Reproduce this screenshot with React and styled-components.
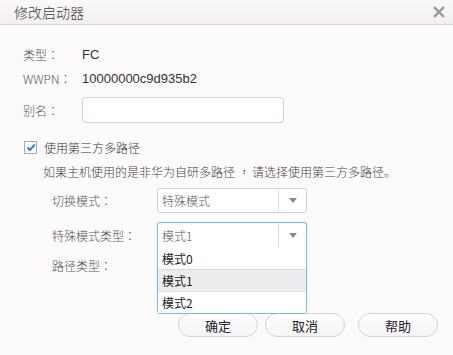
import React from "react";
import styled, { createGlobalStyle } from "styled-components";

const Global = createGlobalStyle`
  html, body { margin: 0; padding: 0; }
  body {
    background: #fdfafc;
    font-family: "Noto Sans CJK SC", "Liberation Sans", sans-serif;
    font-size: 12px;
    font-weight: 300;
    color: #333;
  }
`;

const Dialog = styled.div`
  width: 453px;
  height: 355px;
  box-sizing: border-box;
  display: flex;
  flex-direction: column;
  background: #fdfafc;
`;

const Header = styled.div`
  height: 25px;
  box-sizing: border-box;
  display: flex;
  align-items: center;
  justify-content: space-between;
  padding: 0 8px 0 14px;
  background: linear-gradient(#fbf8fa, #f2eef1);
  border-bottom: 1px solid #dcd8db;
  font-size: 14px;
  color: #3a3a3a;
`;

const Close = styled.span`
  display: flex;
  width: 12px;
  height: 12px;
`;

const Body = styled.div`
  display: flex;
  flex-direction: column;
  padding-left: 23px;
`;

const InfoRow = styled.div`
  display: flex;
  align-items: center;
  height: ${(p) => p.$h || 23}px;
  margin-top: ${(p) => p.$mt || 0}px;
`;

const Label = styled.span`
  width: ${(p) => p.$w}px;
  flex: none;
  color: #555;
  white-space: nowrap;
`;

const Colon = styled.span`
  font-family: "Noto Sans CJK TC", sans-serif;
`;

const Value = styled.span`
  color: #333;
  font-family: "Liberation Sans", "Noto Sans CJK SC", sans-serif;
  font-weight: 400;
  font-size: 13px;
`;

const TextInput = styled.input`
  width: 202px;
  height: 26px;
  box-sizing: border-box;
  border: 1px solid #d4d0d3;
  border-radius: 3px;
  background: #fff;
  outline: none;
  padding: 0 4px;
`;

const CheckRow = styled.label`
  display: flex;
  align-items: center;
  gap: 7px;
  height: 20px;
  margin-top: 14px;
  padding-left: 1px;
  color: #333;
`;

const Box = styled.span`
  width: 13px;
  height: 13px;
  box-sizing: border-box;
  border: 1px solid #a9a9b0;
  background: #fff;
  display: flex;
  align-items: center;
  justify-content: center;
`;

const Desc = styled.div`
  height: 19px;
  margin-top: 5px;
  padding-left: 20px;
  display: flex;
  align-items: center;
  color: #444;
  white-space: pre;
`;

const Punct = styled.span`
  font-family: "Noto Sans CJK TC", sans-serif;
  padding: 0 2px 0 3px;
`;

const FormRow = styled.div`
  position: relative;
  display: flex;
  align-items: center;
  padding-left: 29px;
  height: ${(p) => p.$h || 25}px;
  margin-top: ${(p) => p.$mt || 0}px;
`;

const Select = styled.div`
  width: 150px;
  height: ${(p) => (p.$open ? 26 : 25)}px;
  box-sizing: border-box;
  display: flex;
  align-items: stretch;
  background: #fff;
  border: 1px solid ${(p) => (p.$open ? "#6cc3df" : "#d4d0d3")};
  border-radius: ${(p) => (p.$open ? "3px 3px 0 0" : "3px")};
  border-bottom-color: ${(p) => (p.$open ? "#dcdadc" : "#d4d0d3")};
  position: relative;
`;

const SelectText = styled.span`
  flex: 1;
  display: flex;
  align-items: center;
  padding-left: 4px;
  color: #555;
`;

const Arrow = styled.span`
  width: 27px;
  border-left: 1px solid #dcdadc;
  display: flex;
  align-items: center;
  justify-content: center;
  &::after {
    content: "";
    border-left: 4px solid transparent;
    border-right: 4px solid transparent;
    border-top: 5px solid #888;
  }
`;

const Menu = styled.ul`
  position: absolute;
  left: -1px;
  top: 24px;
  width: 150px;
  box-sizing: border-box;
  margin: 0;
  padding: 0;
  list-style: none;
  background: #fff;
  border: 1px solid #6cc3df;
  border-top: none;
  border-radius: 0 0 3px 3px;
  z-index: 2;
`;

const Item = styled.li`
  height: 22px;
  box-sizing: border-box;
  display: flex;
  align-items: center;
  padding-left: 4px;
  color: #222;
  font-weight: 400;
  background: ${(p) => (p.$active ? "#efecef" : "#fff")};
  border-top: ${(p) => (p.$first ? "none" : "1px solid #dcdadc")};
`;

const Buttons = styled.div`
  display: flex;
  justify-content: flex-end;
  padding-right: 15px;
  margin-top: 39px;
`;

const Button = styled.button`
  width: 80px;
  height: 24px;
  margin-left: ${(p) => p.$ml || 0}px;
  border: 1px solid #d6d2d5;
  border-radius: 12px;
  background: linear-gradient(#ffffff, #f7f4f6);
  font-family: "Noto Sans CJK SC", sans-serif;
  font-size: 13px;
  font-weight: 400;
  color: #222;
  padding: 0;
`;

export default function App() {
  return (
    <Dialog>
      <Global />
      <Header>
        <span>修改启动器</span>
        <Close>
          <svg width="12" height="12" viewBox="0 0 12 12">
            <path d="M2 2 L10 10 M10 2 L2 10" stroke="#9a979a" strokeWidth="2.4" strokeLinecap="square" />
          </svg>
        </Close>
      </Header>
      <Body>
        <InfoRow $mt={18}>
          <Label $w={59}>类型<Colon>：</Colon></Label>
          <Value>FC</Value>
        </InfoRow>
        <InfoRow $h={24}>
          <Label $w={59}>WWPN<Colon>：</Colon></Label>
          <Value>10000000c9d935b2</Value>
        </InfoRow>
        <InfoRow $h={26} $mt={7}>
          <Label $w={59}>别名<Colon>：</Colon></Label>
          <TextInput />
        </InfoRow>
        <CheckRow>
          <Box>
            <svg width="10" height="9" viewBox="0 0 10 9">
              <path d="M1.5 4.5 L4 7 L8.8 1.5" fill="none" stroke="#2b87d0" strokeWidth="2" />
            </svg>
          </Box>
          使用第三方多路径
        </CheckRow>
        <Desc>如果主机使用的是非华为自研多路径<Punct>，</Punct>请选择使用第三方多路径。</Desc>
        <FormRow $mt={7}>
          <Label $w={105}>切换模式<Colon>：</Colon></Label>
          <Select>
            <SelectText>特殊模式</SelectText>
            <Arrow />
          </Select>
        </FormRow>
        <FormRow $mt={9} $h={26}>
          <Label $w={105}>特殊模式类型<Colon>：</Colon></Label>
          <Select $open>
            <SelectText>模式1</SelectText>
            <Arrow />
            <Menu>
              <Item $first>模式0</Item>
              <Item $active>模式1</Item>
              <Item>模式2</Item>
            </Menu>
          </Select>
        </FormRow>
        <FormRow $mt={8} $h={18}>
          <Label $w={105}>路径类型<Colon>：</Colon></Label>
        </FormRow>
      </Body>
      <Buttons>
        <Button>确定</Button>
        <Button $ml={7}>取消</Button>
        <Button $ml={13}>帮助</Button>
      </Buttons>
    </Dialog>
  );
}
